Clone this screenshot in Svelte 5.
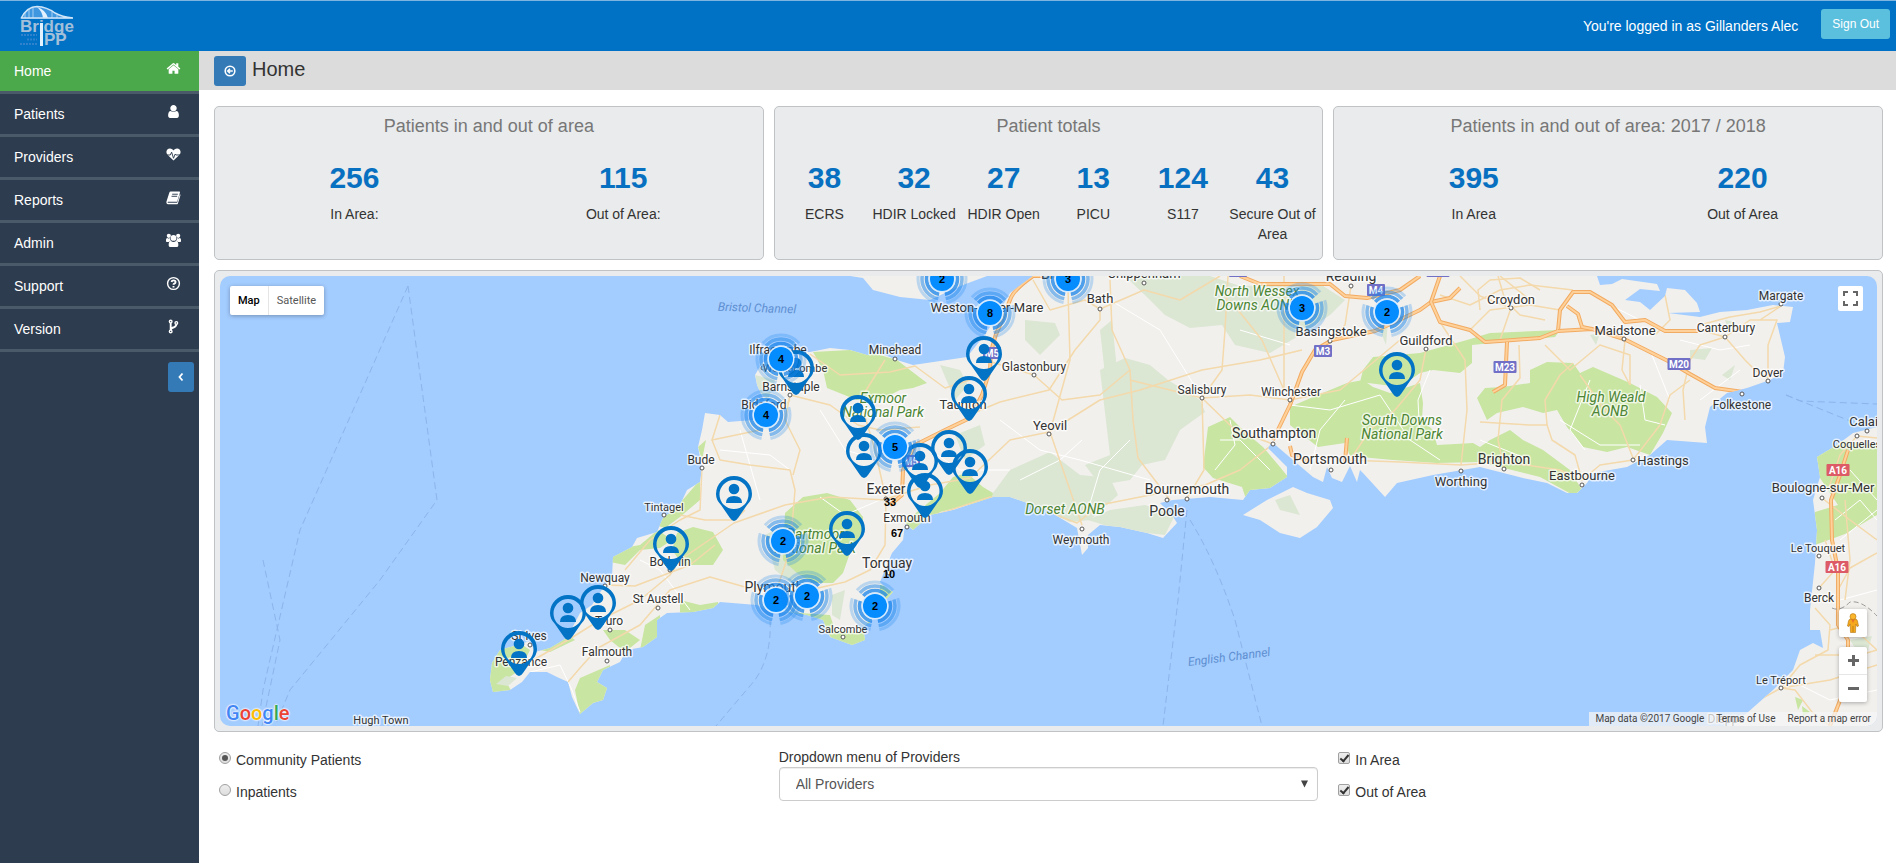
<script>
  const nav = [
    { label: 'Home', icon: 'home', active: true },
    { label: 'Patients', icon: 'user' },
    { label: 'Providers', icon: 'heart' },
    { label: 'Reports', icon: 'book' },
    { label: 'Admin', icon: 'users' },
    { label: 'Support', icon: 'help' },
    { label: 'Version', icon: 'fork' }
  ];

  const cards = [
    { title: 'Patients in and out of area', stats: [['256', 'In Area:'], ['115', 'Out of Area:']] },
    {
      title: 'Patient totals',
      stats: [['38', 'ECRS'], ['32', 'HDIR Locked'], ['27', 'HDIR Open'], ['13', 'PICU'], ['124', 'S117'], ['43', 'Secure Out of Area']]
    },
    { title: 'Patients in and out of area: 2017 / 2018', stats: [['395', 'In Area'], ['220', 'Out of Area']] }
  ];

  // Town labels: name, centre x, baseline y, font size
  const towns = [
    ['Weston-super-Mare', 987, 312, 13], ['Bath', 1100, 303, 13], ['Bristol', 1061, 279, 14],
    ['Ilfracombe', 778, 354, 12], ['Woolacombe', 795, 372, 11], ['Barnstaple', 791, 391, 12],
    ['Bideford', 764, 409, 12], ['Minehead', 895, 354, 12], ['Glastonbury', 1034, 371, 12],
    ['Taunton', 963, 409, 13], ['Yeovil', 1050, 430, 13], ['Exeter', 886, 494, 14],
    ['Exmouth', 907, 522, 12], ['Weymouth', 1081, 544, 12], ['Torquay', 887, 568, 14],
    ['Plymouth', 774, 592, 14], ['Salcombe', 843, 633, 11], ['Bude', 701, 464, 12],
    ['Tintagel', 664, 511, 11], ['Bodmin', 670, 566, 12], ['Newquay', 605, 582, 12],
    ['St Austell', 658, 603, 12], ['Truro', 609, 625, 12], ['St Ives', 529, 640, 12],
    ['Penzance', 521, 666, 12], ['Falmouth', 607, 656, 12], ['Chippenham', 1144, 278, 13],
    ['Reading', 1351, 281, 14], ['Basingstoke', 1331, 336, 13], ['Guildford', 1426, 345, 13],
    ['Salisbury', 1202, 394, 12], ['Winchester', 1291, 396, 12], ['Southampton', 1274, 438, 14],
    ['Portsmouth', 1330, 464, 14], ['Worthing', 1461, 486, 13], ['Bournemouth', 1187, 494, 14],
    ['Poole', 1167, 516, 14], ['Croydon', 1511, 304, 13], ['Maidstone', 1625, 335, 13],
    ['Canterbury', 1726, 332, 12], ['Margate', 1781, 300, 12], ['Dover', 1768, 377, 12],
    ['Folkestone', 1742, 409, 12], ['Brighton', 1504, 464, 14], ['Eastbourne', 1582, 480, 13],
    ['Hastings', 1663, 465, 13], ['Calais', 1867, 426, 13], ['Coquelles', 1857, 448, 11],
    ['Boulogne-sur-Mer', 1823, 492, 13], ['Le Touquet', 1818, 552, 11], ['Berck', 1819, 602, 12],
    ['Le Tréport', 1781, 684, 11], ['Hugh Town', 381, 724, 11], ['Dieppe', 1726, 723, 12]
  ];

  const dots = [
    [1100, 309], [763, 368], [790, 395], [895, 359], [1034, 375], [1049, 434], [886, 499], [907, 527],
    [1082, 529], [843, 637], [702, 468], [664, 515], [605, 586], [658, 608], [610, 630], [530, 645],
    [607, 661], [1144, 283], [1351, 286], [1330, 341], [1426, 349], [1202, 398], [1290, 400], [1273, 444],
    [1331, 470], [1461, 471], [1187, 499], [1167, 500], [1511, 308], [1624, 339], [1725, 337], [1781, 304],
    [1768, 381], [1742, 394], [1504, 469], [1582, 485], [1633, 460], [1867, 431], [1857, 436], [1822, 498],
    [1819, 556], [1819, 588], [1781, 688], [889, 573], [670, 570]
  ];

  const parks = [
    ['Exmoor', 883, 403], ['National Park', 883, 417], ['Dorset AONB', 1065, 514],
    ['Dartmoor', 815, 539], ['National Park', 815, 553], ['North Wessex', 1257, 296],
    ['Downs AONB', 1257, 310], ['South Downs', 1402, 425], ['National Park', 1402, 439],
    ['High Weald', 1611, 402], ['AONB', 1610, 416]
  ];

  const shields = [
    ['M5', 992, 353], ['M5', 911, 461], ['M4', 1376, 290], ['M3', 1323, 351], ['M23', 1505, 367],
    ['M20', 1679, 364], ['M4', 1238, 271], ['M25', 1438, 271], ['A16', 1838, 470], ['A16', 1837, 567]
  ];

  // Pin positions: x of the tip, y of the tip
  const pins = [
    [984, 381], [796, 395], [969, 421], [1397, 397], [858, 440], [864, 478], [970, 494], [949, 475],
    [925, 518], [920, 488], [734, 521], [847, 556], [671, 571], [568, 640], [598, 630], [519, 676]
  ];

  const clusters = [
    [942, 279, 2], [1068, 279, 3], [990, 313, 8], [781, 359, 4], [766, 415, 4], [895, 447, 5],
    [1302, 308, 3], [1387, 312, 2], [783, 541, 2], [776, 600, 2], [807, 596, 2], [875, 606, 2]
  ];

  const counts = [['33', 890, 506], ['67', 897, 537], ['10', 889, 578]];

  const motorways = [
    'M1060 276L1033 276Q1013 290 1010 300L1000 325Q990 345 990 370L982 395L970 418L945 430L915 445L903 470L902 495L890 505',
    'M1240 276L1260 284L1330 284L1345 296L1367 298L1400 290L1420 276',
    'M1273 440L1290 405L1302 372L1315 350L1332 340L1375 331L1395 322L1420 310L1431 302L1450 298L1460 288',
    'M1440 276L1431 302L1440 322L1470 330L1485 342L1500 341L1540 338L1558 331L1560 310L1573 292L1590 292L1612 305L1625 322L1645 320L1665 331L1698 331',
    'M1558 331L1592 329L1624 339L1668 361L1690 374L1715 388L1743 392',
    'M1567 306L1578 314L1582 327L1592 329', 'M1507 342L1505 385L1493 392',
    'M1290 446L1292 455L1310 462', 'M1345 462L1347 438', 'M1848 450L1840 475L1831 500L1832 540L1838 570L1838 625L1848 640L1848 680L1830 726'
  ];
  const mainRoads = [
    'M510 664L530 662L568 640L600 620L640 600L670 575L680 560L734 523L785 505L830 497L886 500',
    'M568 682L580 668L598 648L640 625L670 590L710 577L745 587L776 592L800 592L845 582L870 570L885 545L886 500',
    'M605 585L635 586L690 565L715 545', 'M702 467L700 510L680 520L650 540L625 570',
    'M680 515L705 520L735 520L745 510', 'M712 440L720 460L750 465L790 470L795 490L790 550L776 592',
    'M790 395L830 405L858 425L880 430L920 427', 'M790 395L785 420L800 450L793 475', 'M720 415L712 440L760 430L790 400',
    'M810 354L840 375L890 372L915 366L945 388L970 380', 'M886 499L875 450L860 400L885 360',
    'M886 499L930 485L970 478L1010 440L1049 432L1100 400L1140 390L1202 370L1260 360L1302 350',
    'M935 515L990 497L1030 505L1077 523L1100 505L1150 495L1205 485L1240 470L1273 444',
    'M969 415L1000 402L1049 390L1075 350L1100 320L1100 309', 'M985 360L1034 375L1062 400L1100 395L1130 370',
    'M1033 280L1050 310L1085 300L1100 309L1144 290L1180 300L1220 276', 'M1068 290L1070 360L1050 432L1082 525',
    'M1110 280L1112 330L1130 370L1133 420L1138 458L1170 500', 'M1202 398L1222 370L1225 330L1228 276',
    'M1202 398L1235 430L1273 444', 'M1202 398L1204 470L1187 498', 'M1284 276L1284 390L1262 340L1230 300',
    'M1130 380L1202 398L1250 395L1290 400L1340 390L1370 365L1400 340', 'M1351 286L1345 325L1330 341',
    'M1426 349L1420 380L1395 410L1370 430L1350 460', 'M1345 460L1400 462L1461 465L1504 462L1560 470L1582 480L1600 465L1633 460L1660 425L1670 395L1690 380',
    'M1504 468L1498 440L1502 400L1520 378L1519 345', 'M1440 322L1465 360L1467 410L1461 465', 'M1545 345L1570 370L1600 345L1630 355L1630 385',
    'M1480 422L1530 425L1547 425L1552 440L1575 455L1582 480', 'M1547 425L1545 400L1560 375L1573 363', 'M1580 375L1605 410L1620 425L1633 458',
    'M1625 340L1622 370L1630 385', 'M1725 337L1700 345L1690 360L1683 390L1685 420', 'M1725 337L1745 360L1755 370L1768 378L1768 345L1777 320L1750 320L1725 337L1700 330',
    'M1700 325L1730 317L1760 312L1781 306L1760 320', 'M1655 335L1670 320L1665 295', 'M1498 276L1505 300L1520 315L1545 320',
    'M1440 295L1470 305L1500 290L1530 285L1573 290', 'M1460 276L1480 296L1511 308L1500 340', 'M1470 330L1490 310L1530 305L1560 310', 'M1500 276L1530 300',
    'M1480 310L1478 290L1490 280L1520 278L1540 290', 'M1877 438L1857 436L1840 455L1828 490', 'M1822 498L1850 520L1877 540', 'M1845 500L1850 560L1845 600', 'M1877 553L1850 568L1838 590',
    'M1819 588L1835 570L1825 540', 'M1815 608L1830 625L1828 650L1800 665L1781 688L1750 705', 'M1781 688L1830 680L1877 665', 'M1815 655L1860 655L1877 650L1850 625L1830 630',
    'M1781 688L1795 690L1812 712L1830 726'
  ];
  const whiteRoads = [
    'M530 672L560 665L572 690L580 712', 'M640 560L660 570L690 610', 'M720 450L770 455L790 470', 'M740 430L760 500', 'M820 410L845 450L880 460',
    'M820 497L845 515L880 500', 'M930 450L960 470L1010 470', 'M1000 420L1040 450L1080 460L1150 480', 'M1020 480L1060 460L1082 440', 'M1088 510L1100 470L1130 440',
    'M1110 300L1160 330L1202 398', 'M1240 330L1290 345', 'M1290 405L1330 410L1380 395L1410 440L1440 460', 'M1310 470L1320 430L1345 400', 'M1220 440L1240 440L1270 470',
    'M1215 470L1235 445L1230 420', 'M1420 440L1418 400L1430 370', 'M1560 420L1600 445L1640 445', 'M1590 380L1570 430L1585 450', 'M1640 385L1645 420L1665 425',
    'M1650 350L1670 400', 'M1700 400L1740 370', 'M1850 470L1877 500', 'M1835 520L1860 500L1877 520', 'M1840 540L1877 510', 'M1840 600L1877 590', 'M1790 680L1830 700L1877 690',
    'M1600 300L1640 320', 'M1680 340L1720 350L1750 345', 'M1480 440L1530 460'
  ];
  const ferries = [
    'M408 286L300 530L263 690L258 726', 'M408 286L437 500L380 580L290 690L275 726', 'M263 560L280 640L262 726',
    'M770 620Q772 655 755 680L716 726', 'M1187 510L1178 600L1163 726', 'M1190 520Q1215 560 1235 620L1262 726',
    'M1786 395L1800 401L1877 404', 'M1786 395L1850 421'
  ];

  let patientType = $state('community');
  let inArea = $state(true);
  let outArea = $state(true);
  let provider = $state('All Providers');
</script>

{#snippet icon(name)}
  {#if name === 'home'}
    <svg class="icon" viewBox="0 0 1792 1792"><path d="M1472 992v480q0 26-19 45t-45 19h-384v-384h-256v384h-384q-26 0-45-19t-19-45v-480q0-1 .5-3t.5-3l575-474 575 474q1 2 1 6zm223-69l-62 74q-8 9-21 11h-3q-13 0-21-7l-692-577-692 577q-12 8-24 7-13-2-21-11l-62-74q-8-10-7-23.500t11-21.500l719-599q32-26 76-26t76 26l244 204v-195q0-14 9-23t23-9h192q14 0 23 9t9 23v408l219 182q10 8 11 21.500t-7 23.500z" /></svg>
  {:else if name === 'user'}
    <svg class="icon" viewBox="0 0 1792 1792"><path d="M1536 1399q0 109-62.500 187t-150.500 78h-854q-88 0-150.500-78t-62.500-187q0-85 8.500-160.500t31.500-152 58.500-131 94-89 134.500-34.500q131 128 313 128t313-128q76 0 134.500 34.500t94 89 58.500 131 31.500 152 8.500 160.500zm-256-887q0 159-112.500 271.500t-271.500 112.500-271.500-112.500-112.500-271.500 112.500-271.500 271.500-112.500 271.500 112.500 112.500 271.500z" /></svg>
  {:else if name === 'heart'}
    <svg class="icon" viewBox="0 0 16 16"><path d="M8 14.500L1.800 8.600C-1 5.500.8 1.500 4.200 1.500 6 1.500 7.300 2.700 8 3.600 8.700 2.700 10 1.500 11.800 1.500c3.400 0 5.200 4 2.400 7.100z" /><path class="cut" d="M0 8.500h4.600l1.400-3 2 6.500 1.800-4.500.8 1H16" /></svg>
  {:else if name === 'book'}
    <svg class="icon" viewBox="0 0 16 16"><path d="M5 1.500h9.200q1 0 .7 1.100l-2.800 9q-.3.900-1.200.9H2.200q-.6 0-.4.700.2.500.9.500h9.200l2.900-9.300q.9.400.6 1.300l-2.700 8.600q-.3.900-1.300.9H2.500Q.6 15.200.4 13.200q-.1-.5.200-1.300L3.500 2.800Q3.900 1.500 5 1.500z" /><path class="cut" d="M6.600 4.500h6M5.900 6.700h6" /></svg>
  {:else if name === 'users'}
    <svg class="icon" viewBox="0 0 16 16"><circle cx="3" cy="3" r="2.200" /><circle cx="13" cy="3" r="2.200" /><circle cx="8" cy="5.200" r="3.100" /><path d="M0 9V7.300Q0 5.400 1.500 5.200q1.500 1 2.800.2Q4.300 7.400 5.300 8.500 3.500 8.500 3 9.500H1Q0 9.500 0 9zM16 9V7.300q0-1.900-1.500-2.100-1.500 1-2.800.2 0 2-1 3.100 1.800 0 2.300 1H15q1 0 1-.5zM2.800 13q0-4.400 2.500-4.400 2.700 1.800 5.400 0 2.500 0 2.500 4.400 0 2-2 2H4.800q-2 0-2-2z" /></svg>
  {:else if name === 'help'}
    <svg class="icon line" viewBox="0 0 16 16"><circle cx="8" cy="8" r="6.300" /><path d="M5.900 6.400Q6.200 4.600 8 4.600q2.200 0 2.200 1.700Q10.200 7.500 8.900 8.100q-.9.400-.9 1.300M8 10.600v1.600" stroke-width="2" /></svg>
  {:else}
    <svg class="icon line" viewBox="0 0 16 16"><circle cx="5" cy="2.700" r="1.400" /><circle cx="5" cy="13.300" r="1.400" /><circle cx="11" cy="4.200" r="1.400" /><path d="M5 4.200v7.500M11 5.700Q11 8 8.500 8.800 5.400 9.600 5 11.700" stroke-width="2" /></svg>
  {/if}
{/snippet}

<header class="topbar">
  <svg class="logo" viewBox="18 3 60 46" role="img" aria-label="Bridge IPP">
    <path d="M21 18Q27 6 37 6.500Q47 7 55 13Q62 17 73 17.500V19H21z" fill="#3f97e0" />
    <path d="M37 7Q46 10 48 18H43Q42 11 37 7z" fill="#e4f2ff" />
    <path d="M21 18.500Q27 6.500 37 6.500Q47 7 55 13Q62 17 73 18M21 18H73" fill="none" stroke="#cfe5f8" stroke-width="1.500" />
    <path d="M25 12v6M29 9v9M33 8v10M52 12v6M57 15v3" stroke="#cfe5f8" stroke-width=".7" />
    <text x="20" y="32" font-size="17">Bridge</text>
    <text x="44" y="45" font-size="17">PP</text>
    <path d="M41.500 23V46" stroke="#e4f2ff" stroke-width="3" />
    <path d="M21 35h16M27 39.500h10M20 44h17" stroke="#2f82cb" stroke-width="2" stroke-dasharray="2 1" />
  </svg>
  <span class="user">You're logged in as Gillanders Alec</span>
  <button class="signout" type="button">Sign Out</button>
</header>

<div class="shell">
  <nav class="sidebar" aria-label="Main">
    {#each nav as item}
      <a class="item" class:active={item.active} href="#{item.icon}">
        <span>{item.label}</span>
        {@render icon(item.icon)}
      </a>
    {/each}
    <button class="collapse" type="button" aria-label="Collapse menu">
      <svg viewBox="0 0 10 10" width="10" height="10"><path d="M6.500 1.500L3.500 5l3 3.500" fill="none" stroke="#fff" stroke-width="1.800" /></svg>
    </button>
  </nav>

  <main>
    <div class="titlebar">
      <button class="back" type="button" aria-label="Back">
        <svg viewBox="0 0 12 12" width="12" height="12"><circle cx="6" cy="6" r="4.800" fill="none" stroke="#fff" stroke-width="1.600" /><path d="M8.800 6H4M6 3.700L3.700 6 6 8.300" fill="none" stroke="#fff" stroke-width="1.500" /></svg>
      </button>
      <h1>Home</h1>
    </div>

    <div class="content">
      <div class="grid">
        {#each cards as card}
          <section class="panel card">
            <h2>{card.title}</h2>
            <div class="stats">
              {#each card.stats as [value, label]}
                <div class="stat"><strong>{value}</strong><span>{label}</span></div>
              {/each}
            </div>
          </section>
        {/each}
      </div>

      <section class="panel mapcard" aria-label="Patient map">
        <div class="map">
          <svg class="canvas" viewBox="220 276 1657 450" preserveAspectRatio="xMidYMid slice">
            <defs>
              <clipPath id="land">
                <path d="M490 680L492 663L500 650L517 645L530 641L535 652L550 648L567 638L580 613L592 605L605 585L612 577L613 557L632 547L637 538L657 532L663 518L680 505L687 490L700 482L702 467L698 447L702 430L705 413L720 415L728 422L753 420L767 407L757 385L755 375L762 363L780 352L810 352L830 348L850 350L867 355L880 353L897 360L913 365L947 360L967 357L983 337L990 327L986 322L1000 310L1010 293L1033 276H1560L1597 276L1600 285L1612 284L1622 279L1657 284L1660 291L1640 289L1625 300L1640 302L1650 310L1665 296L1667 288L1685 290L1697 303L1700 312L1668 313L1700 317L1720 312L1747 310L1773 305L1793 307L1790 322L1777 323L1785 357L1783 373L1770 380L1747 388L1727 393L1710 407L1705 427L1707 443L1667 440L1650 455L1627 467L1593 473L1587 483L1577 493L1567 493L1547 483L1523 478L1480 467L1433 475L1397 483L1385 497L1363 473L1360 470L1357 482L1350 466L1342 482L1332 478L1327 467L1323 482L1313 477L1293 460L1272 442L1268 448L1287 467L1287 477L1270 488L1250 490L1243 500L1210 497L1173 500L1160 503L1172 515L1177 523L1163 538L1147 533L1120 527L1100 525L1088 535L1088 548L1082 555L1077 528L1047 510L1010 497L993 497L953 510L930 515L913 530L905 524L903 540L892 553L880 582L886 588L893 592L883 603L873 620L863 627L865 640L852 645L830 637L823 620L807 615L787 612L773 613L757 605L720 602L713 608L693 612L667 613L657 620L657 637L643 647L627 650L620 662L603 670L597 682L607 688L603 700L593 703L580 714L572 697L568 682L557 677L547 672L530 672L522 682L510 690L493 692Z" />
                <path d="M850 276L863 278L873 290L900 297L930 300L947 292L963 285L987 276Z" />
                <path d="M1243 515L1267 500L1293 487L1307 493L1330 500L1333 508L1317 527L1300 538L1280 533L1260 520Z" />
                <path d="M1877 427L1853 433L1837 445L1817 457L1820 477L1813 500L1817 530L1815 563L1810 610V630L1820 630L1823 648L1813 643L1800 650L1793 670L1773 690L1747 713L1727 726H1877Z" />
              </clipPath>
              <g id="pin">
                <path fill-rule="evenodd" d="M0 0Q-2 0 -4 -3L-13 -16Q-18 -21 -18 -27A18 18 0 0 1 18 -27Q18 -21 13 -16L4 -3Q2 0 0 0ZM0 -41A14.500 14.500 0 1 0 0 -12A14.500 14.500 0 1 0 0 -41Z" />
                <circle cy="-32" r="5.300" />
                <path d="M-8 -18Q-8 -25 0 -25Q8 -25 8 -18V-18H-8Z" />
              </g>
              <g id="rings" fill="none" stroke="#1583ea">
                <circle r="24" stroke-width="3" opacity=".25" pathLength="360" stroke-dasharray="98 22" stroke-dashoffset="-101" />
                <circle r="20" stroke-width="3.500" opacity=".5" pathLength="360" stroke-dasharray="98 22" stroke-dashoffset="-101" />
                <circle r="15.500" stroke-width="3.500" opacity=".75" pathLength="360" stroke-dasharray="98 22" stroke-dashoffset="-101" />
                <circle r="12.500" stroke="#d6ebff" stroke-width="2" />
              </g>
            </defs>
            <rect x="220" y="276" width="1657" height="450" fill="#a3ccff" />
            <g fill="none" stroke="#8bb6ec" stroke-width="1" stroke-dasharray="7 4">
              {#each ferries as d}<path {d} />{/each}
            </g>
            <g clip-path="url(#land)">
              <rect x="220" y="276" width="1657" height="450" fill="#f2f0ed" />
              <g fill="#dbe6d3">
                <path d="M1125 276H1210L1240 286L1320 284L1345 300L1330 315L1300 335L1270 353L1235 345L1222 325L1190 328L1165 315L1150 300Z" />
                <path d="M1100 370L1125 358L1150 365L1168 380L1200 400L1205 412L1180 430L1165 460L1142 465L1130 480L1100 485L1085 465L1110 455Z" />
                <path d="M990 497L1010 470L1050 452L1080 475L1110 478L1118 495L1090 520L1070 522L1040 508Z" />
                <path d="M1025 320L1055 323L1060 335L1040 355L1025 340Z" />
                <path d="M1088 520L1110 510L1145 505L1175 515L1165 535L1120 530Z" />
                <path d="M940 365L960 370L968 385L955 400Z" />
                <path d="M765 535L785 525L790 560L808 575L800 590L775 570Z" />
                <path d="M755 375L775 380L768 400L758 390Z" />
                <path d="M955 435L980 425L985 445L965 460Z" />
                <path d="M832 595L845 590L840 620L832 615Z" />
                <path d="M1100 330L1112 320L1118 380L1105 375Z" />
                <path d="M1850 640L1872 636L1868 650L1855 648Z" />
                <path d="M1590 335L1600 333L1596 345ZM1690 350L1712 348L1705 360L1690 358ZM1722 375L1735 365L1730 380ZM1725 320L1735 322L1728 330ZM1380 330L1388 322L1386 345Z" />
                <path d="M1275 500L1290 495L1300 515L1280 510Z" />
              </g>
              <g fill="#c8e5a2">
                <path d="M813 352L850 350L880 355L897 360L910 370L927 383L913 388L900 390L880 400L857 400L827 388L823 370Z" />
                <path d="M803 497L827 493L850 500L863 517V533L850 553L843 573L833 583H813L797 573L783 560L785 513Z" />
                <path d="M677 533L693 527L713 532L723 550L713 565H683L672 550Z" />
                <path d="M680 503L700 480V500L680 517L665 528L655 525Z" />
                <path d="M612 550L640 545L658 530L672 540L660 548L640 550L625 565L610 562Z" />
                <path d="M485 660L515 640L530 650L520 670L505 680L512 692H488Z" />
                <path d="M580 678L610 665V700L580 716L575 690Z" />
                <path d="M603 630L625 630L640 640L625 652L610 640Z" />
                <path d="M645 625L660 615V640L640 650Z" />
                <path d="M680 600L700 605L718 602V615H680Z" />
                <path d="M540 650L568 635L575 640L550 652Z" />
                <path d="M785 612L830 615L835 630L860 632L870 620V650H840L820 622Z" />
                <path d="M880 585L895 588L890 600L880 605Z" />
                <path d="M940 493L953 477L967 473L983 487L993 493L990 503L967 505L940 512L915 532L905 522Z" />
                <path d="M698 447L706 440L702 460Z" />
                <path d="M1208 427L1230 417L1243 430L1263 447L1280 467L1288 477L1267 490L1247 502L1242 487L1213 478L1203 467Z" />
                <path d="M1290 407L1313 397L1347 383L1363 380L1373 387L1390 393L1420 383L1423 403L1422 420L1433 430L1437 445L1473 443L1480 447L1490 440L1510 430L1523 440L1543 450L1570 470L1582 490L1573 495L1540 477L1480 462L1437 463L1393 460L1350 456L1345 443L1318 447L1290 425Z" />
                <path d="M1363 370L1373 357L1420 353L1467 340L1490 333L1560 330L1555 337L1472 345V363L1460 373L1433 370L1420 373L1400 387L1360 382Z" />
                <path d="M1530 370L1547 362L1573 363L1580 373L1593 367L1630 383L1657 397L1672 413L1663 433L1650 455L1627 447L1607 452L1583 447L1567 427L1557 410L1543 413L1523 407L1497 413L1487 420L1477 398L1485 388L1503 387L1530 383Z" />
                <path d="M1877 445L1835 440L1815 455L1818 475L1838 505L1815 512V545L1845 534L1877 515Z" />
                <path d="M1795 697L1803 700L1798 710ZM1802 706L1810 712L1803 716Z" />
              </g>
              <path d="M496 684L506 676L517 678L508 686Z" fill="#dbe6d3" />
              <g fill="none" stroke-linejoin="round">
                {#each whiteRoads as d}<path {d} stroke="#fff" stroke-width="1" />{/each}
                {#each mainRoads as d}<path {d} stroke="#f3d9ab" stroke-width="1.500" />{/each}
                {#each motorways as d}<path {d} stroke="#f2ab62" stroke-width="4" /><path {d} stroke="#ffd19a" stroke-width="2" />{/each}
                <path d="M1832 608Q1840 612 1850 602Q1862 600 1877 616" stroke="#999" stroke-dasharray="5 3" />
              </g>
            </g>
            <g class="halo" fill="#333">
              {#each dots as [cx, cy]}<circle {cx} {cy} r="2" fill="#fff" stroke="#555" />{/each}
              {#each towns as [name, x, y, size]}<text {x} {y} font-size={size}>{name}</text>{/each}
            </g>
            <g class="halo" fill="#4c8533" font-style="italic" font-size="14">
              {#each parks as [name, x, y]}<text {x} {y}>{name}</text>{/each}
            </g>
            <g class="sea">
              <text x="757" y="312" transform="rotate(2 757 308)">Bristol Channel</text>
              <text x="1229" y="661" transform="rotate(-7 1229 657)">English Channel</text>
            </g>
            {#each shields as [name, x, y]}
              {@const w = name.length > 2 ? 23 : 18}
              <rect x={x - w / 2} y={y - 6} width={w} height="12" rx="1" fill={name[0] === 'A' ? '#dc5b66' : '#7170c6'} />
              <text class="shield" {x} y={y + 4}>{name}</text>
            {/each}
            <g fill="#0273c5">
              {#each pins as [x, y]}<use href="#pin" {x} {y} />{/each}
            </g>
            {#each clusters as [x, y, n]}
              <use href="#rings" {x} {y} />
              <circle cx={x} cy={y} r="12" fill="#058cff" />
              <text class="count" {x} y={y + 4}>{n}</text>
            {/each}
            {#each counts as [n, x, y]}<text class="count" {x} {y}>{n}</text>{/each}
          </svg>

          <div class="maptype">
            <button type="button" class="on">Map</button>
            <button type="button">Satellite</button>
          </div>
          <button class="ctl full" type="button" aria-label="Full screen">
            <svg viewBox="0 0 15 15" width="15" height="15"><path d="M1 5V1h4M10 1h4v4M14 10v4h-4M5 14H1v-4" fill="none" stroke="#666" stroke-width="2" /></svg>
          </button>
          <div class="side">
            <button class="ctl" type="button" aria-label="Street View">
              <svg viewBox="0 0 14 20" width="14" height="20"><path d="M4.500 6h5q1.500 0 2 2l1 5-1.500.5L9.800 11 9.500 19.500H4.500L4.200 11 3 13.500 1.500 13l1-5q.5-2 2-2z" fill="#f6a81c" stroke="#b27614" stroke-width=".6" /><circle cx="7" cy="3.600" r="3" fill="#fbb62c" stroke="#b27614" stroke-width=".6" /><path d="M5.200 6.500h3.600L7 10z" fill="#e8722a" /><path d="M7 13v6" stroke="#b27614" stroke-width=".8" /></svg>
            </button>
            <div class="zoom">
              <button type="button" aria-label="Zoom in"><svg viewBox="0 0 11 11" width="11" height="11"><path d="M5.500 0v11M0 5.500h11" stroke="#666" stroke-width="3" /></svg></button>
              <button type="button" aria-label="Zoom out"><svg viewBox="0 0 11 11" width="11" height="11"><path d="M0 5.500h11" stroke="#666" stroke-width="3" /></svg></button>
            </div>
          </div>
          <div class="google" aria-label="Google"><span class="b">G</span><span class="r">o</span><span class="y">o</span><span class="b">g</span><span class="g">l</span><span class="r">e</span></div>
          <div class="credit">
            <span>Map data ©2017 Google</span><a href="#terms">Terms of Use</a><a href="#report">Report a map error</a>
          </div>
        </div>
      </section>

      <form class="grid filters">
        <div class="col choices">
          <label class="choice"><input type="radio" name="type" value="community" bind:group={patientType} />Community Patients</label>
          <label class="choice"><input type="radio" name="type" value="inpatients" bind:group={patientType} />Inpatients</label>
        </div>
        <div class="col">
          <label class="caption" for="provider">Dropdown menu of Providers</label>
          <div class="select">
            <select id="provider" bind:value={provider}><option>All Providers</option></select>
            <svg viewBox="0 0 8 8" width="7" height="8" aria-hidden="true"><path d="M0 0h8L4 8z" fill="#444" /></svg>
          </div>
        </div>
        <div class="col choices">
          <label class="choice"><input type="checkbox" bind:checked={inArea} />In Area</label>
          <label class="choice"><input type="checkbox" bind:checked={outArea} />Out of Area</label>
        </div>
      </form>
    </div>
  </main>
</div>

<style>
  :global(body) {
    font-family: "Liberation Sans", Arial, sans-serif;
    font-size: 14px;
    line-height: 20px;
    color: #333;
    background: #fff;
  }
  :global(#app) {
    display: flex;
    flex-direction: column;
    min-height: 100vh;
  }
  button {
    border: 0;
    padding: 0;
    display: flex;
    align-items: center;
    justify-content: center;
    font: inherit;
    cursor: pointer;
  }
  a { color: inherit; text-decoration: none; }

  .topbar {
    display: flex;
    align-items: center;
    box-sizing: border-box;
    height: 51px;
    padding: 0 6px 0 18px;
    border-top: 1px solid #7db4e0;
    background: #0072c6;
    color: #fff;
  }
  .logo { width: 60px; height: 46px; margin-right: auto; }
  .logo text { font-weight: bold; fill: #a3bfd9; }
  .signout {
    align-self: flex-start;
    height: 30px;
    margin: 8px 0 0 23px;
    padding: 0 11px;
    border-radius: 3px;
    background: #5bc0de;
    color: #fff;
    font-size: 12px;
  }

  .shell { display: flex; flex: 1; }
  .sidebar {
    display: flex;
    flex-direction: column;
    flex: 0 0 199px;
    background: #2d3c4e;
    color: #fff;
  }
  .item {
    display: flex;
    align-items: center;
    justify-content: space-between;
    height: 40px;
    padding: 0 18px 0 14px;
    border-bottom: 3px solid #4a5a68;
  }
  .item.active { background: #4ba84b; }
  .icon { width: 15px; height: 15px; margin-bottom: 6px; fill: #fff; }
  .icon .cut { fill: none; stroke: #2d3c4e; stroke-width: 1; }
  .icon.line { fill: none; stroke: #fff; stroke-width: 1.5; }
  .collapse {
    align-self: flex-end;
    width: 26px;
    height: 30px;
    margin: 10px 5px;
    border-radius: 3px;
    background: #337ab7;
  }

  main { flex: 1; min-width: 0; }
  .titlebar {
    display: flex;
    gap: 6px;
    box-sizing: border-box;
    height: 39px;
    padding: 5px 15px;
    background: #dcdcdc;
  }
  .back { width: 32px; height: 30px; border-radius: 3px; background: #337ab7; }
  h1 { margin: 0; font-size: 20px; line-height: 26px; font-weight: normal; }

  .content { padding: 16px 13px 16px 15px; }
  .grid { display: grid; grid-template-columns: repeat(3, minmax(0, 1fr)); gap: 10px; }
  .panel {
    box-sizing: border-box;
    border: 1px solid #bfc3c6;
    border-radius: 5px;
    background: #e9ebec;
  }
  .card { min-height: 154px; padding: 9px 5px; text-align: center; }
  h2 { margin: 0; font-size: 18px; line-height: 20px; font-weight: normal; color: #777; }
  .stats { display: flex; margin-top: 25px; }
  .stat { flex: 1 1 0; min-width: 0; }
  .stat strong { display: block; margin-bottom: 9px; font-size: 30px; line-height: 34px; color: #0870c0; }
  .stat span { display: block; }

  .mapcard { margin-top: 10px; padding: 5px; }
  .map { position: relative; height: 450px; overflow: hidden; border-radius: 10px; font-family: Roboto, sans-serif; }
  .canvas { display: block; width: 100%; height: 100%; }
  .canvas text { text-anchor: middle; }
  .halo text { stroke: rgba(255, 255, 255, .7); stroke-width: 3; stroke-linejoin: round; paint-order: stroke; }
  .sea { fill: #5e8fd0; font-size: 12px; font-style: italic; }
  .shield { fill: #fff; font-size: 10px; font-weight: bold; }
  .count { fill: #000; font: bold 11px "Liberation Sans", Arial, sans-serif; }

  .maptype {
    position: absolute;
    top: 10px;
    left: 10px;
    display: flex;
    border-radius: 2px;
    background: #fff;
    box-shadow: 0 1px 4px rgba(0, 0, 0, .3);
    font-size: 11px;
  }
  .maptype button { height: 29px; padding: 0 8px; background: none; color: #565656; }
  .maptype .on { border-right: 1px solid #e6e6e6; color: #000; font-weight: 500; }
  .ctl, .zoom { width: 28px; border-radius: 2px; background: #fff; box-shadow: 0 1px 4px rgba(0, 0, 0, .3); }
  .ctl { height: 28px; }
  .full { position: absolute; top: 10px; right: 14px; width: 25px; height: 25px; box-shadow: none; }
  .side { position: absolute; right: 10px; bottom: 24px; display: flex; flex-direction: column; gap: 10px; }
  .zoom button { width: 28px; height: 27px; background: none; }
  .zoom button + button { border-top: 1px solid #e6e6e6; height: 28px; }
  .google {
    position: absolute;
    left: 6px;
    bottom: 0;
    font-size: 20px;
    line-height: 26px;
    font-weight: 500;
    text-shadow: 0 0 2px #fff, 0 0 2px #fff, 0 0 2px #fff;
  }
  .b { color: #4285f4; }
  .r { color: #ea4335; }
  .y { color: #fbbc05; }
  .g { color: #34a853; }
  .credit {
    position: absolute;
    right: 0;
    bottom: 0;
    display: flex;
    gap: 12px;
    padding: 0 6px;
    background: rgba(245, 245, 245, .75);
    color: #444;
    font-size: 10px;
    line-height: 14px;
  }

  .filters { margin-top: 16px; }
  .col { padding: 0 5px; }
  .choices { padding-top: 2px; }
  .choice { display: flex; align-items: center; gap: 5px; margin-bottom: 12px; line-height: 20px; }
  .choice input {
    appearance: none;
    box-sizing: border-box;
    width: 12px;
    height: 12px;
    margin: 0 0 4px;
    border: 1px solid #a0a0a0;
    background: linear-gradient(#eee, #ddd);
    display: grid;
    place-items: center;
  }
  .choice input[type="radio"] { border-radius: 50%; }
  .choice input[type="checkbox"] { border-radius: 2px; }
  .choice input[type="radio"]:checked::before { content: ""; width: 6px; height: 6px; border-radius: 50%; background: #555; }
  .choice input[type="checkbox"]:checked::before {
    content: "";
    width: 3px;
    height: 7px;
    margin-bottom: 2px;
    border: solid #333;
    border-width: 0 2px 2px 0;
    transform: rotate(40deg);
  }
  .caption { display: block; line-height: 19px; }
  .select { position: relative; }
  .select svg { position: absolute; right: 10px; top: 13px; pointer-events: none; }
  select {
    appearance: none;
    display: block;
    box-sizing: border-box;
    width: 100%;
    height: 34px;
    padding: 0 28px 0 16px;
    border: 1px solid #ccc;
    border-radius: 4px;
    background: #fff;
    box-shadow: inset 0 1px 1px rgba(0, 0, 0, .075);
    color: #555;
    font: inherit;
  }
</style>
